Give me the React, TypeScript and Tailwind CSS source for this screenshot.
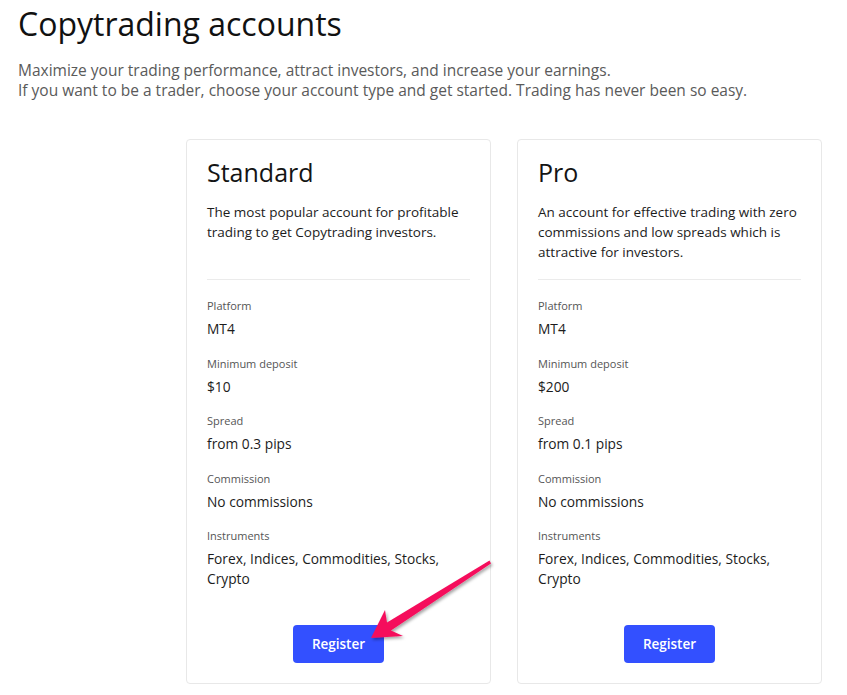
import React from "react";

type Account = {
  name: string;
  description: string;
  rows: { label: string; value: string }[];
};

const accounts: Account[] = [
  {
    name: "Standard",
    description:
      "The most popular account for profitable trading to get Copytrading investors.",
    rows: [
      { label: "Platform", value: "MT4" },
      { label: "Minimum deposit", value: "$10" },
      { label: "Spread", value: "from 0.3 pips" },
      { label: "Commission", value: "No commissions" },
      { label: "Instruments", value: "Forex, Indices, Commodities, Stocks, Crypto" },
    ],
  },
  {
    name: "Pro",
    description:
      "An account for effective trading with zero commissions and low spreads which is attractive for investors.",
    rows: [
      { label: "Platform", value: "MT4" },
      { label: "Minimum deposit", value: "$200" },
      { label: "Spread", value: "from 0.1 pips" },
      { label: "Commission", value: "No commissions" },
      { label: "Instruments", value: "Forex, Indices, Commodities, Stocks, Crypto" },
    ],
  },
];

const AccountCard: React.FC<{ account: Account }> = ({ account }) => (
  <div className="w-[305px] flex flex-col border border-[#e8e8e8] rounded-[4px] bg-white px-5 pt-4 pb-5">
    <h2 className="text-[25px] leading-[32px] text-[#141414]">{account.name}</h2>
    <p className="mt-[14px] h-[60px] text-[13.5px] leading-[20px] text-[#1c1c1c]">
      {account.description}
    </p>
    <div className="mt-[17px] h-px bg-[#ebebeb]" />
    <div className="mt-[17px] flex flex-col gap-[15.5px]">
      {account.rows.map((row) => (
        <div key={row.label}>
          <div className="text-[11px] leading-[18px] text-[#555]">{row.label}</div>
          <div className="mt-[4px] text-[13.75px] leading-[20px] text-[#1c1c1c]">{row.value}</div>
        </div>
      ))}
    </div>
    <div className="mt-[36px] flex justify-center">
      <button className="w-[91px] h-[38px] rounded-[4px] bg-[#3350ff] text-white text-[13.5px] font-semibold">
        Register
      </button>
    </div>
  </div>
);

export default function App() {
  return (
    <div
      className="relative w-[847px] h-[695px] bg-white overflow-hidden"
      style={{ fontFamily: '"Open Sans", "DejaVu Sans", sans-serif' }}
    >
      <div className="px-[18px] pt-[5px]">
        <h1 className="text-[32px] leading-[38px] text-[#111]">Copytrading accounts</h1>
        <p className="mt-[17px] text-[15.5px] leading-[20px] text-[#5a5a5a]">
          Maximize your trading performance, attract investors, and increase your earnings.
          <br />
          If you want to be a trader, choose your account type and get started. Trading has never been so easy.
        </p>
      </div>
      <div className="mt-[39px] flex justify-end gap-[26px] pr-[25px]">
        {accounts.map((a) => (
          <AccountCard key={a.name} account={a} />
        ))}
      </div>
      <svg
        className="absolute top-0 left-0 pointer-events-none"
        width="847"
        height="695"
        viewBox="0 0 847 695"
      >
        <defs>
          <filter id="sh" x="-20%" y="-20%" width="140%" height="140%">
            <feDropShadow dx="1.5" dy="2" stdDeviation="1.5" floodColor="#000" floodOpacity="0.35" />
          </filter>
        </defs>
        <polygon
          points="371,638 385,610 387,622.5 489.5,560.5 491,563.5 391,630.5 403,636"
          fill="#f5105c"
          filter="url(#sh)"
        />
      </svg>
    </div>
  );
}
